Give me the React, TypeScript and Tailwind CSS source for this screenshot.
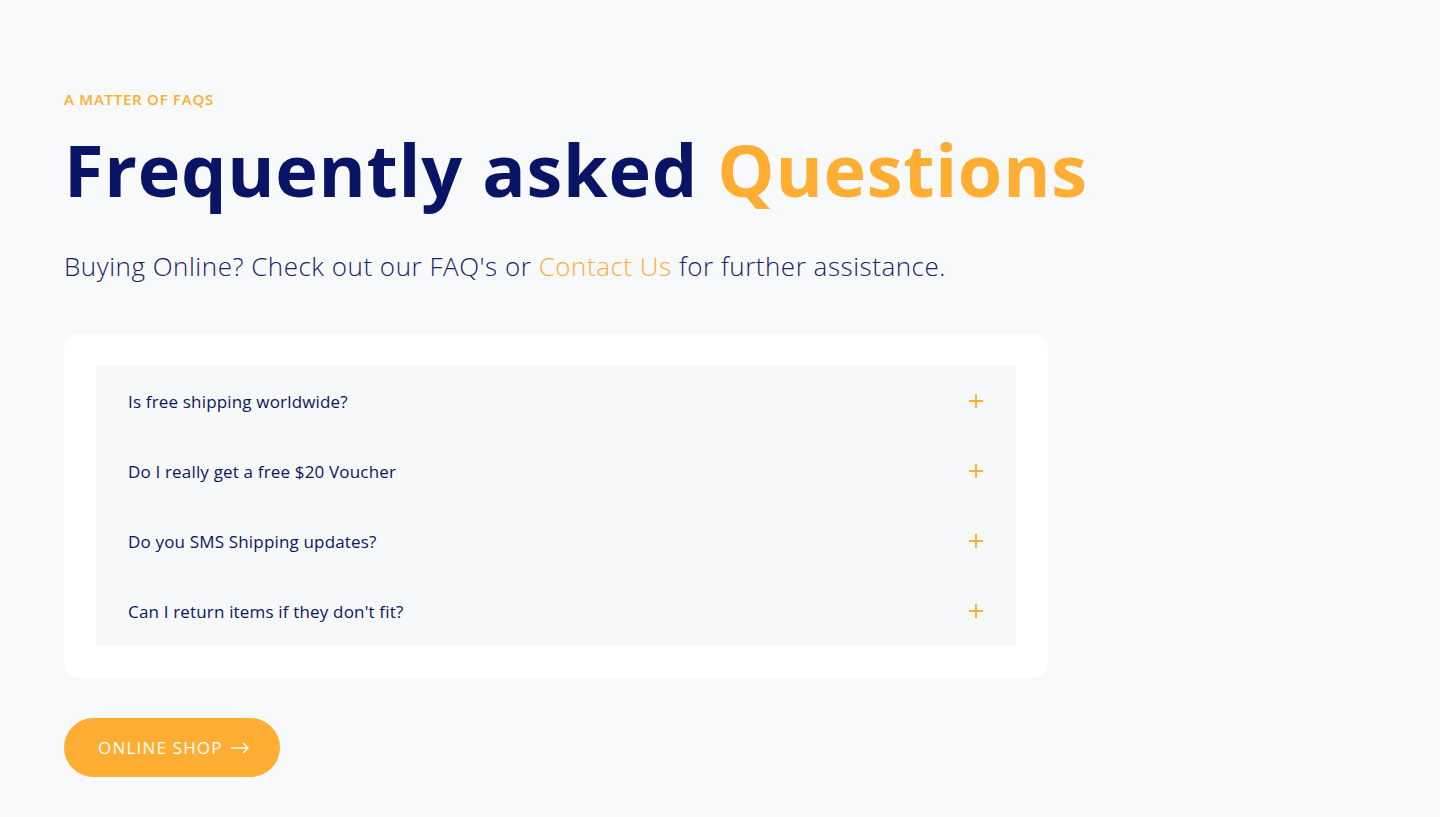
const faqs = [
  'Is free shipping worldwide?',
  'Do I really get a free $20 Voucher',
  'Do you SMS Shipping updates?',
  "Can I return items if they don't fit?",
];

const PlusIcon = () => (
  <svg width="14" height="14" viewBox="0 0 14 14" fill="none" stroke="#ffad33" strokeWidth="1.8">
    <path d="M7 0v14M0 7h14" />
  </svg>
);

const App = () => {
  return (
    <section className="min-h-[817px] w-full bg-[#f8f9fb] font-['Open_Sans',sans-serif]">
      <div className="px-16 pt-[86px] pb-10">
        <p className="text-[15px] font-semibold uppercase tracking-[0.05em] text-[#ffad33] leading-[26px]">
          A matter of FAQs
        </p>
        <h1 className="mt-[13px] text-[72px] font-bold leading-[88px] tracking-[0.01em] text-[#0a1464]">
          Frequently asked <span className="text-[#ffad33]">Questions</span>
        </h1>
        <p className="mt-[33px] text-[26px] font-light leading-[40px] tracking-[0.02em] text-[#1c2363]">
          Buying Online? Check out our FAQ's or{' '}
          <span className="text-[#ffad33]">Contact Us</span> for further assistance.
        </p>

        <div className="mt-12 w-[984px] rounded-2xl bg-white p-8">
          <div className="flex flex-col bg-[#f7f8fa]">
            {faqs.map((q) => (
              <div key={q} className="flex h-[70px] items-center justify-between pl-8 pr-[33px]">
                <span className="text-[17px] leading-none tracking-[0.01em] text-[#0c1660]">{q}</span>
                <PlusIcon />
              </div>
            ))}
          </div>
        </div>

        <button className="mt-10 flex h-[59px] items-center gap-2 rounded-full bg-[#ffad33] pl-[34px] pr-[31px] text-[17px] uppercase tracking-[0.07em] text-white">
          Online shop
          <svg width="18" height="12" viewBox="0 0 18 12" fill="none" stroke="currentColor" strokeWidth="1.3">
            <path d="M0 6h17M12 1l5 5-5 5" />
          </svg>
        </button>
      </div>
    </section>
  );
};

export default App;
